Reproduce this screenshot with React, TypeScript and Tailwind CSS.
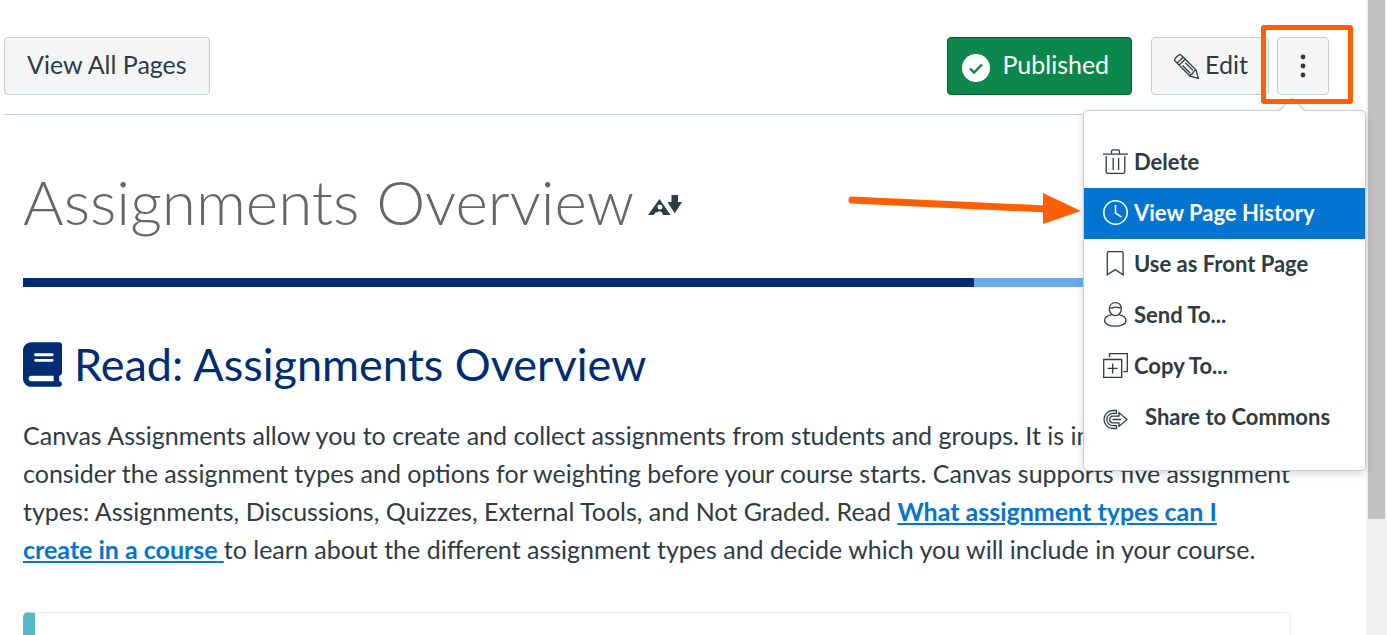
import React, { useState } from 'react';

type IconProps = { className?: string };

const line = {
  fill: 'none',
  stroke: 'currentColor',
  strokeWidth: 1.3,
  viewBox: '0 0 25 25',
  'aria-hidden': true,
};

const TrashIcon = ({ className }: IconProps) => (
  <svg {...line} className={className}>
    <path d="M0 5.2h25M8.5 5V2.4a1.5 1.5 0 0 1 1.5-1.5h5a1.5 1.5 0 0 1 1.5 1.5V5M3.2 7v15.7a1.6 1.6 0 0 0 1.6 1.6h15.4a1.6 1.6 0 0 0 1.6-1.6V7M10.2 9v12M15.6 9v12" />
  </svg>
);

const ClockIcon = ({ className }: IconProps) => (
  <svg {...line} strokeWidth={1.6} className={className}>
    <circle cx="12.5" cy="12.5" r="11.7" />
    <path d="M12.5 5v8l6 4.2" />
  </svg>
);

const BookmarkIcon = ({ className }: IconProps) => (
  <svg {...line} className={className}>
    <path d="M4.3 23.8V2A1.3 1.3 0 0 1 5.6.7h13.2A1.3 1.3 0 0 1 20.1 2v21.8l-7.9-5.2z" />
  </svg>
);

const UserIcon = ({ className }: IconProps) => (
  <svg {...line} className={className}>
    <path d="M6.3 7c0-4 2.5-6.300 6-6.300s6 2.300 6 6.300-2.700 6.600-6 6.600-6-2.600-6-6.600zM6.500 5.400c2 1.600 3.600.2 5-.2 2.300-.6 4.500 1.600 6.500 0M8.200 12.800c-4.200.9-6.600 3-6.600 5.700 0 3.400 4.500 5.700 10.700 5.700S23 21.900 23 18.500c0-2.700-2.400-4.800-6.600-5.700" />
  </svg>
);

const CopyIcon = ({ className }: IconProps) => (
  <svg {...line} className={className}>
    <path d="M.7 6.5h18v17.800H.7zM6.500 4V.7h17.800v17.900h-4M9.700 10.400v10M4.700 15.400h10" />
  </svg>
);

const ShareIcon = ({ className }: IconProps) => (
  <svg {...line} className={className}>
    <path d="M13.5 6.500H10a9 9 0 0 0 0 18h3.500v-2.800H10a6.200 6.200 0 0 1 0-12.400h3.500zM16 12.100V8.600l8 6.900-8 6.900v-3.500H10a3.400 3.400 0 0 1 0-6.800zM9.500 15.500H18" />
  </svg>
);

const PencilIcon = ({ className }: IconProps) => (
  <svg {...line} className={className}>
    <path d="M24.3 24.3l-2.200-8.300L7.200 1.300a2 2 0 0 0-2.900 0L1.300 4.300a2 2 0 0 0 0 2.900L16 22.100zM16 22.100c.2-1.600.9-2.200 2.600-2.300.2-1.800 1-3 3.500-3.800M3.200 9.100l5.900-5.900M5.200 11.100l5.900-5.900M8.500 11.500l7.700 7.700M11.300 8.700l7.700 7.700" />
  </svg>
);

const AltFormatsIcon = ({ className }: IconProps) => (
  <svg viewBox="0 0 34 20" fill="currentColor" aria-hidden="true" className={className}>
    <path
      fillRule="evenodd"
      d="M11.5 4 0 20h5.500l2-2.500h1.500c.5-1.300 4.500-1.300 5 0l1.200 2.500h7.300zM12 9.400a2.500 2.500 0 1 0 0 5 2.500 2.500 0 0 0 0-5z"
    />
    <path d="M23.5 0h6.500v7h4l-7.300 11.200L19.500 7h4z" />
  </svg>
);

const BookIcon = ({ className }: IconProps) => (
  <svg viewBox="0 0 448 512" fill="currentColor" aria-hidden="true" className={className}>
    <path d="M96 0C43 0 0 43 0 96v320c0 53 43 96 96 96h320c17.700 0 32-14.300 32-32s-14.300-32-32-32v-64c17.700 0 32-14.300 32-32V32c0-17.700-14.300-32-32-32H96zm0 384h256v64H96c-17.700 0-32-14.300-32-32s14.300-32 32-32zm32-240c0-8.800 7.200-16 16-16h192c8.800 0 16 7.200 16 16s-7.200 16-16 16H144c-8.800 0-16-7.200-16-16zm16 48h192c8.800 0 16 7.200 16 16s-7.200 16-16 16H144c-8.800 0-16-7.200-16-16s7.200-16 16-16z" />
  </svg>
);

const menuItems = [
  { label: 'Delete', Icon: TrashIcon },
  { label: 'View Page History', Icon: ClockIcon },
  { label: 'Use as Front Page', Icon: BookmarkIcon },
  { label: 'Send To...', Icon: UserIcon },
  { label: 'Copy To...', Icon: CopyIcon },
  { label: 'Share to Commons', Icon: ShareIcon, wide: true },
];

function PageMenu() {
  const [active, setActive] = useState('View Page History');

  return (
    <div className="absolute top-[73px] -right-[37px] z-10 w-[283px]">
      <div
        role="menu"
        aria-label="Page options"
        className="rounded-[5px] border border-[#c7cdd1] bg-white pt-[26px] pb-[27px] shadow-[0_3px_8px_rgba(0,0,0,0.15)]"
      >
        {menuItems.map(({ label, Icon, wide }) => (
          <button
            key={label}
            role="menuitem"
            onMouseEnter={() => setActive(label)}
            className={`flex h-[51px] w-full items-center pb-[2px] pl-[19px] text-[22px] font-bold ${
              wide ? 'gap-[17px]' : 'gap-[6px]'
            } ${active === label ? 'bg-[#0374d0] text-white' : 'text-[#2d3b45]'}`}
          >
            <Icon className="size-[25px] overflow-visible" />
            {label}
          </button>
        ))}
      </div>
      {/* pointer towards the kebab button */}
      <svg viewBox="0 0 28 14" aria-hidden="true" className="absolute -top-3 left-[195px] h-[14px] w-7">
        <path d="M1 13 14 0l13 13v1H1z" fill="#fff" />
        <path d="M1 12.5 14 .5l13 12" fill="none" stroke="#c7cdd1" strokeWidth="1.5" />
      </svg>
      <svg viewBox="0 0 236 34" aria-hidden="true" className="absolute top-[82px] right-[284px] h-[34px] w-[236px]">
        <path d="M6 8 200 17" stroke="#ff5f00" strokeWidth="7" strokeLinecap="round" />
        <path d="M197 1v31l38-13z" fill="#ff5f00" />
      </svg>
    </div>
  );
}

function Toolbar() {
  return (
    <header className="pl-1 pr-[37px] pt-[37px]">
      <div className="flex items-center border-b border-[#c7cdd1] pb-[19px]">
        <button className="h-[58px] rounded-[4px] border border-[#c7cdd1] bg-[#f5f5f5] px-[22px] pb-[2px]">
          View All Pages
        </button>
        <button className="ml-auto flex h-[58px] items-center gap-3 rounded-[4px] border border-[#0a5a34] bg-[#0b874b] pl-[14px] pr-[22px] text-white">
          <svg viewBox="0 0 28 28" aria-hidden="true" className="mt-1 size-7">
            <circle cx="14" cy="14" r="14" fill="#fff" />
            <path d="m8 14.5 4 4 8-8" fill="none" stroke="#0b874b" strokeWidth="2.4" />
          </svg>
          <span className="pb-[2px]">Published</span>
        </button>
        <button className="ml-[19px] flex h-[58px] items-center gap-[6px] rounded-[4px] border border-[#c7cdd1] bg-[#f5f5f5] pl-[22px] pr-5">
          <PencilIcon className="size-[25px]" />
          <span className="pb-[2px]">Edit</span>
        </button>
        <div className="relative ml-2">
          <button
            aria-label="More options"
            aria-haspopup="menu"
            className="flex h-[58px] w-[52px] items-center justify-center rounded-[4px] border border-[#c7cdd1] bg-[#f5f5f5]"
          >
            <svg viewBox="0 0 6 24" fill="currentColor" aria-hidden="true" className="h-6 w-[6px]">
              <circle cx="3" cy="3" r="2.4" />
              <circle cx="3" cy="12" r="2.4" />
              <circle cx="3" cy="21" r="2.4" />
            </svg>
          </button>
          <PageMenu />
          <div className="pointer-events-none absolute -top-3 -right-6 -bottom-[9px] -left-4 z-20 rounded-[3px] border-[5px] border-[#ff5f00]" />
        </div>
      </div>
    </header>
  );
}

export default function App() {
  return (
    <div className="flex h-screen overflow-hidden bg-white font-['Lato',sans-serif] text-[25px] text-[#2d3b45]">
      <main className="min-w-0 flex-1">
        <Toolbar />
        <article className="pl-[23px] pr-[75px] pt-12">
          <div className="flex items-center gap-[14px]">
            <h1 className="text-[62px] leading-[76px] font-light text-[#666]">Assignments Overview</h1>
            <button aria-label="Alternative formats" className="pt-2">
              <AltFormatsIcon className="h-5 w-[34px]" />
            </button>
          </div>
          <div className="mt-[39px] flex h-[9px] bg-[#68ace5]">
            <div className="w-3/4 bg-[#002d72]" />
          </div>
          <h2 className="mt-[47px] flex items-center gap-3 text-[45px] leading-[60px] text-[#002d72]">
            <BookIcon className="h-[45px] w-[39px]" />
            Read: Assignments Overview
          </h2>
          <p className="mt-[22px] leading-[38px]">
            Canvas Assignments allow you to create and collect assignments from students and groups. It is important to
            consider the assignment types and options for weighting before your course starts. Canvas supports five
            assignment types: Assignments, Discussions, Quizzes, External Tools, and Not Graded. Read{' '}
            <a href="#assignment-types" className="font-bold text-[#0374d0] underline">
              What assignment types can I create in a course{' '}
            </a>
            to learn about the different assignment types and decide which you will include in your course.
          </p>
          <section className="mt-11 h-40 rounded-[5px] border border-l-[12px] border-[#ebedee] border-l-[#54b9c9]" />
        </article>
      </main>
      {/* scrollbar */}
      <div className="w-[21px] bg-[#f0f0f0] px-[2px]">
        <div className="h-[519px] bg-[#c1c1c1]" />
      </div>
    </div>
  );
}
